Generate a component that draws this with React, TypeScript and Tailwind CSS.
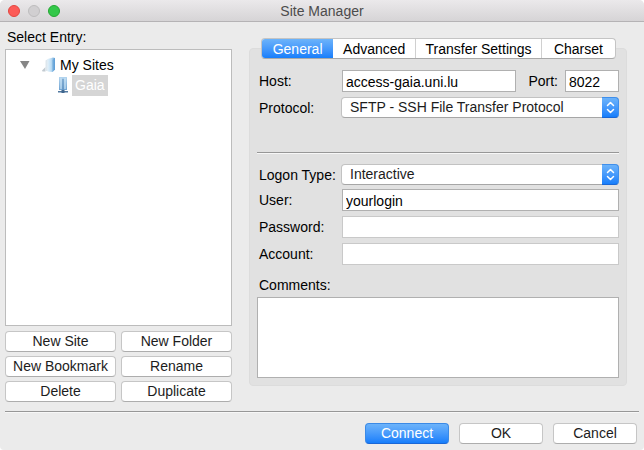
import { useState } from "react";
import type { ReactNode } from "react";

const tabs = [
  { name: "General", width: "grow-[72]" },
  { name: "Advanced", width: "grow-[83]" },
  { name: "Transfer Settings", width: "grow-[126]" },
  { name: "Charset", width: "grow-[74]" },
];

const siteActions = ["New Site", "New Folder", "New Bookmark", "Rename", "Delete", "Duplicate"];

function PushButton({ children, primary = false }: { children: ReactNode; primary?: boolean }) {
  return (
    <button
      type="button"
      className={
        primary
          ? "h-[21px] w-full rounded border border-[#3b8ae6] border-b-[#1a67d6] bg-linear-to-b from-[#6cb3fa] to-[#157efb] text-center leading-[19px] text-white"
          : "h-[21px] w-full rounded border border-[#c6c6c6] border-b-[#adadad] bg-white text-center leading-[19px] text-[#1c1c1c]"
      }
    >
      {children}
    </button>
  );
}

function Divider() {
  return <hr className="h-[2px] border-0 border-t border-t-[#979797] bg-[#f7f7f7]" />;
}

function PopUp({ id, value }: { id: string; value: string }) {
  return (
    <div className="relative -ml-px min-w-0 flex-1">
      <select
        id={id}
        defaultValue={value}
        className="block h-[21px] w-full appearance-none rounded border border-[#c2c2c2] border-b-[#a6a6a6] bg-white pr-6 pl-2 leading-[19px] text-[#1c1c1c]"
      >
        <option>{value}</option>
      </select>
      <span className="pointer-events-none absolute inset-y-0 right-0 flex w-[17px] items-center justify-center rounded-r border border-l-0 border-[#3f8fec] border-b-[#1a67d6] bg-linear-to-b from-[#6cb3fa] to-[#157efb]">
        <svg width="9" height="13" viewBox="0 0 9 13" fill="none" stroke="white" strokeWidth="1.5" strokeLinecap="round" strokeLinejoin="round">
          <path d="M1.5 4.5 4.5 1.5l3 3M1.5 8.5l3 3 3-3" />
        </svg>
      </span>
    </div>
  );
}

function Field({ id, value, dim = false, className }: { id: string; value?: string; dim?: boolean; className: string }) {
  return (
    <input
      id={id}
      type={id === "password" ? "password" : "text"}
      defaultValue={value}
      className={`h-[22px] min-w-0 border bg-white px-[3px] pt-[2px] text-black ${dim ? "border-[#c9c9c9]" : "border-[#b0b0b0]"} ${className}`}
    />
  );
}

function Row({ id, label, className, children }: { id: string; label: string; className: string; children: ReactNode }) {
  return (
    <div className={`flex items-center ${className}`}>
      <label htmlFor={id} className="w-[85px] shrink-0 whitespace-nowrap pl-[2px]">
        {label}
      </label>
      {children}
    </div>
  );
}

function FolderIcon() {
  return (
    <svg width="14" height="16" viewBox="0 0 14 16" className="shrink-0">
      <defs>
        <linearGradient id="folder" x1="0" x2="1" y1="0" y2="0">
          <stop offset="0" stopColor="#e4f2fb" />
          <stop offset="0.5" stopColor="#bcdcf3" />
          <stop offset="1" stopColor="#5f9fd6" />
        </linearGradient>
      </defs>
      <path d="M0 13.500 3.500 10v4.500H.5z" fill="#c3cbd1" />
      <path d="M3.500 3.500 6 2v12H3.500z" fill="#dde7ee" />
      <path d="M5.500 2 11 .5 13 1v11.500L10.500 15l-5-.5z" fill="url(#folder)" />
      <path d="M10.500 3 13 1v11.500L10.500 15z" fill="#5a9bd6" opacity=".5" />
    </svg>
  );
}

function ServerIcon() {
  return (
    <svg width="12" height="17" viewBox="0 0 12 17" className="shrink-0">
      <defs>
        <linearGradient id="server" x1="0" x2="0" y1="0" y2="1">
          <stop offset="0" stopColor="#b4d5ef" />
          <stop offset="1" stopColor="#6fa3d2" />
        </linearGradient>
      </defs>
      <path d="M2 0h8v13H2z" fill="url(#server)" />
      <path d="M3 1h2v11H3zM7 1h2v11H7z" fill="#c8e2f5" opacity=".6" />
      <path d="M6 2v12" stroke="#5c8dbb" strokeWidth="1" />
      <path d="M1 14h10v1.500H1z" fill="#5279a0" />
      <path d="M4.500 13h3v3h-3z" fill="#3f668e" />
    </svg>
  );
}

export default function App() {
  const [active, setActive] = useState("General");

  return (
    <div className="flex min-h-screen flex-col overflow-hidden rounded-t-[5px] rounded-b-[4px] bg-[#ebebeb] font-['Liberation_Sans',Arial,sans-serif] text-sm leading-4 text-black">
      <header className="grid h-[22px] grid-cols-[1fr_auto_1fr] items-center border-b border-[#b5b3b5] bg-linear-to-b from-[#ebe9eb] to-[#d6d4d6] px-2">
        <div className="flex gap-2">
          <button type="button" aria-label="Close" className="size-3 rounded-full border border-[#e2463f] bg-[#fc5b57]" />
          <button type="button" aria-label="Minimize" className="size-3 rounded-full border border-[#bdbcbd] bg-[#d1cfd1]" />
          <button type="button" aria-label="Zoom" className="size-3 rounded-full border border-[#24a732] bg-[#34c84a]" />
        </div>
        <h1 className="text-[#4c4c4c]">Site Manager</h1>
      </header>

      <main className="flex flex-1 gap-[17px] pr-[17px] pl-[5px]">
        <section className="flex w-[227px] shrink-0 flex-col pt-[7px] pb-[9px]">
          <h2 className="pl-[2px]">Select Entry:</h2>
          <ul className="mt-1 min-h-[277px] flex-1 border border-[#bcbcbc] bg-white pt-1">
            <li>
              <div className="flex h-[21px] items-center pl-[14px]">
                <svg width="10" height="8" viewBox="0 0 10 8">
                  <path d="M0 0h9.500L5 8z" fill="#868686" />
                </svg>
                <span className="flex items-center gap-1 pl-3">
                  <FolderIcon />
                  <span>My Sites</span>
                </span>
              </div>
              <ul>
                <li className="flex h-[21px] items-center gap-[3px] pl-[51px]">
                  <ServerIcon />
                  <span className="bg-[#d5d5d5] px-[3px] leading-[21px] text-white">Gaia</span>
                </li>
              </ul>
            </li>
          </ul>
          <div className="mt-[5px] grid grid-cols-2 gap-x-[5px] gap-y-1">
            {siteActions.map((name) => (
              <PushButton key={name}>{name}</PushButton>
            ))}
          </div>
        </section>

        <section className="flex min-w-0 flex-1 flex-col pt-4 pb-[25px]">
          <div role="tablist" className="z-10 mr-[11px] ml-3 flex h-[21px] shrink-0 overflow-hidden rounded border border-[#c4c4c4] border-b-[#a9a9a9] bg-white">
            {tabs.map((tab) => (
              <button
                key={tab.name}
                type="button"
                role="tab"
                aria-selected={active === tab.name}
                onClick={() => setActive(tab.name)}
                className={`basis-0 whitespace-nowrap ${tab.width} ${
                  active === tab.name
                    ? "bg-linear-to-b from-[#6cb3fa] to-[#157efb] text-white"
                    : "border-r border-[#d0d0d0] last:border-r-0"
                }`}
              >
                {tab.name}
              </button>
            ))}
          </div>
          <form className="-mt-[11px] flex flex-1 flex-col rounded border border-[#dcdcdc] bg-[#e1e1e1] px-[7px] pt-[21px] pb-[7px]">
            <Row id="host" label="Host:" className="">
              <Field id="host" value="access-gaia.uni.lu" className="flex-1" />
              <label htmlFor="port" className="pr-[7px] pl-3">
                Port:
              </label>
              <Field id="port" value="8022" className="w-[54px]" />
            </Row>
            <Row id="protocol" label="Protocol:" className="mt-[5px]">
              <PopUp id="protocol" value="SFTP - SSH File Transfer Protocol" />
            </Row>
            <div className="pt-[34px] pb-[10px]">
              <Divider />
            </div>
            <Row id="logon" label="Logon Type:" className="">
              <PopUp id="logon" value="Interactive" />
            </Row>
            <Row id="user" label="User:" className="mt-1">
              <Field id="user" value="yourlogin" className="flex-1" />
            </Row>
            <Row id="password" label="Password:" className="mt-[5px]">
              <Field id="password" dim className="flex-1" />
            </Row>
            <Row id="account" label="Account:" className="mt-[5px]">
              <Field id="account" dim className="flex-1" />
            </Row>
            <label htmlFor="comments" className="mt-3 pl-[2px]">
              Comments:
            </label>
            <textarea id="comments" className="mt-1 min-h-20 flex-1 resize-none border border-[#b0b0b0] bg-white p-1" />
          </form>
        </section>
      </main>

      <footer className="px-[5px] pb-[6px]">
        <Divider />
        <div className="flex justify-end gap-[10px] pt-[10px] pr-[2px]">
          <div className="w-[84px]">
            <PushButton primary>Connect</PushButton>
          </div>
          <div className="w-[84px]">
            <PushButton>OK</PushButton>
          </div>
          <div className="w-[84px]">
            <PushButton>Cancel</PushButton>
          </div>
        </div>
      </footer>
    </div>
  );
}
